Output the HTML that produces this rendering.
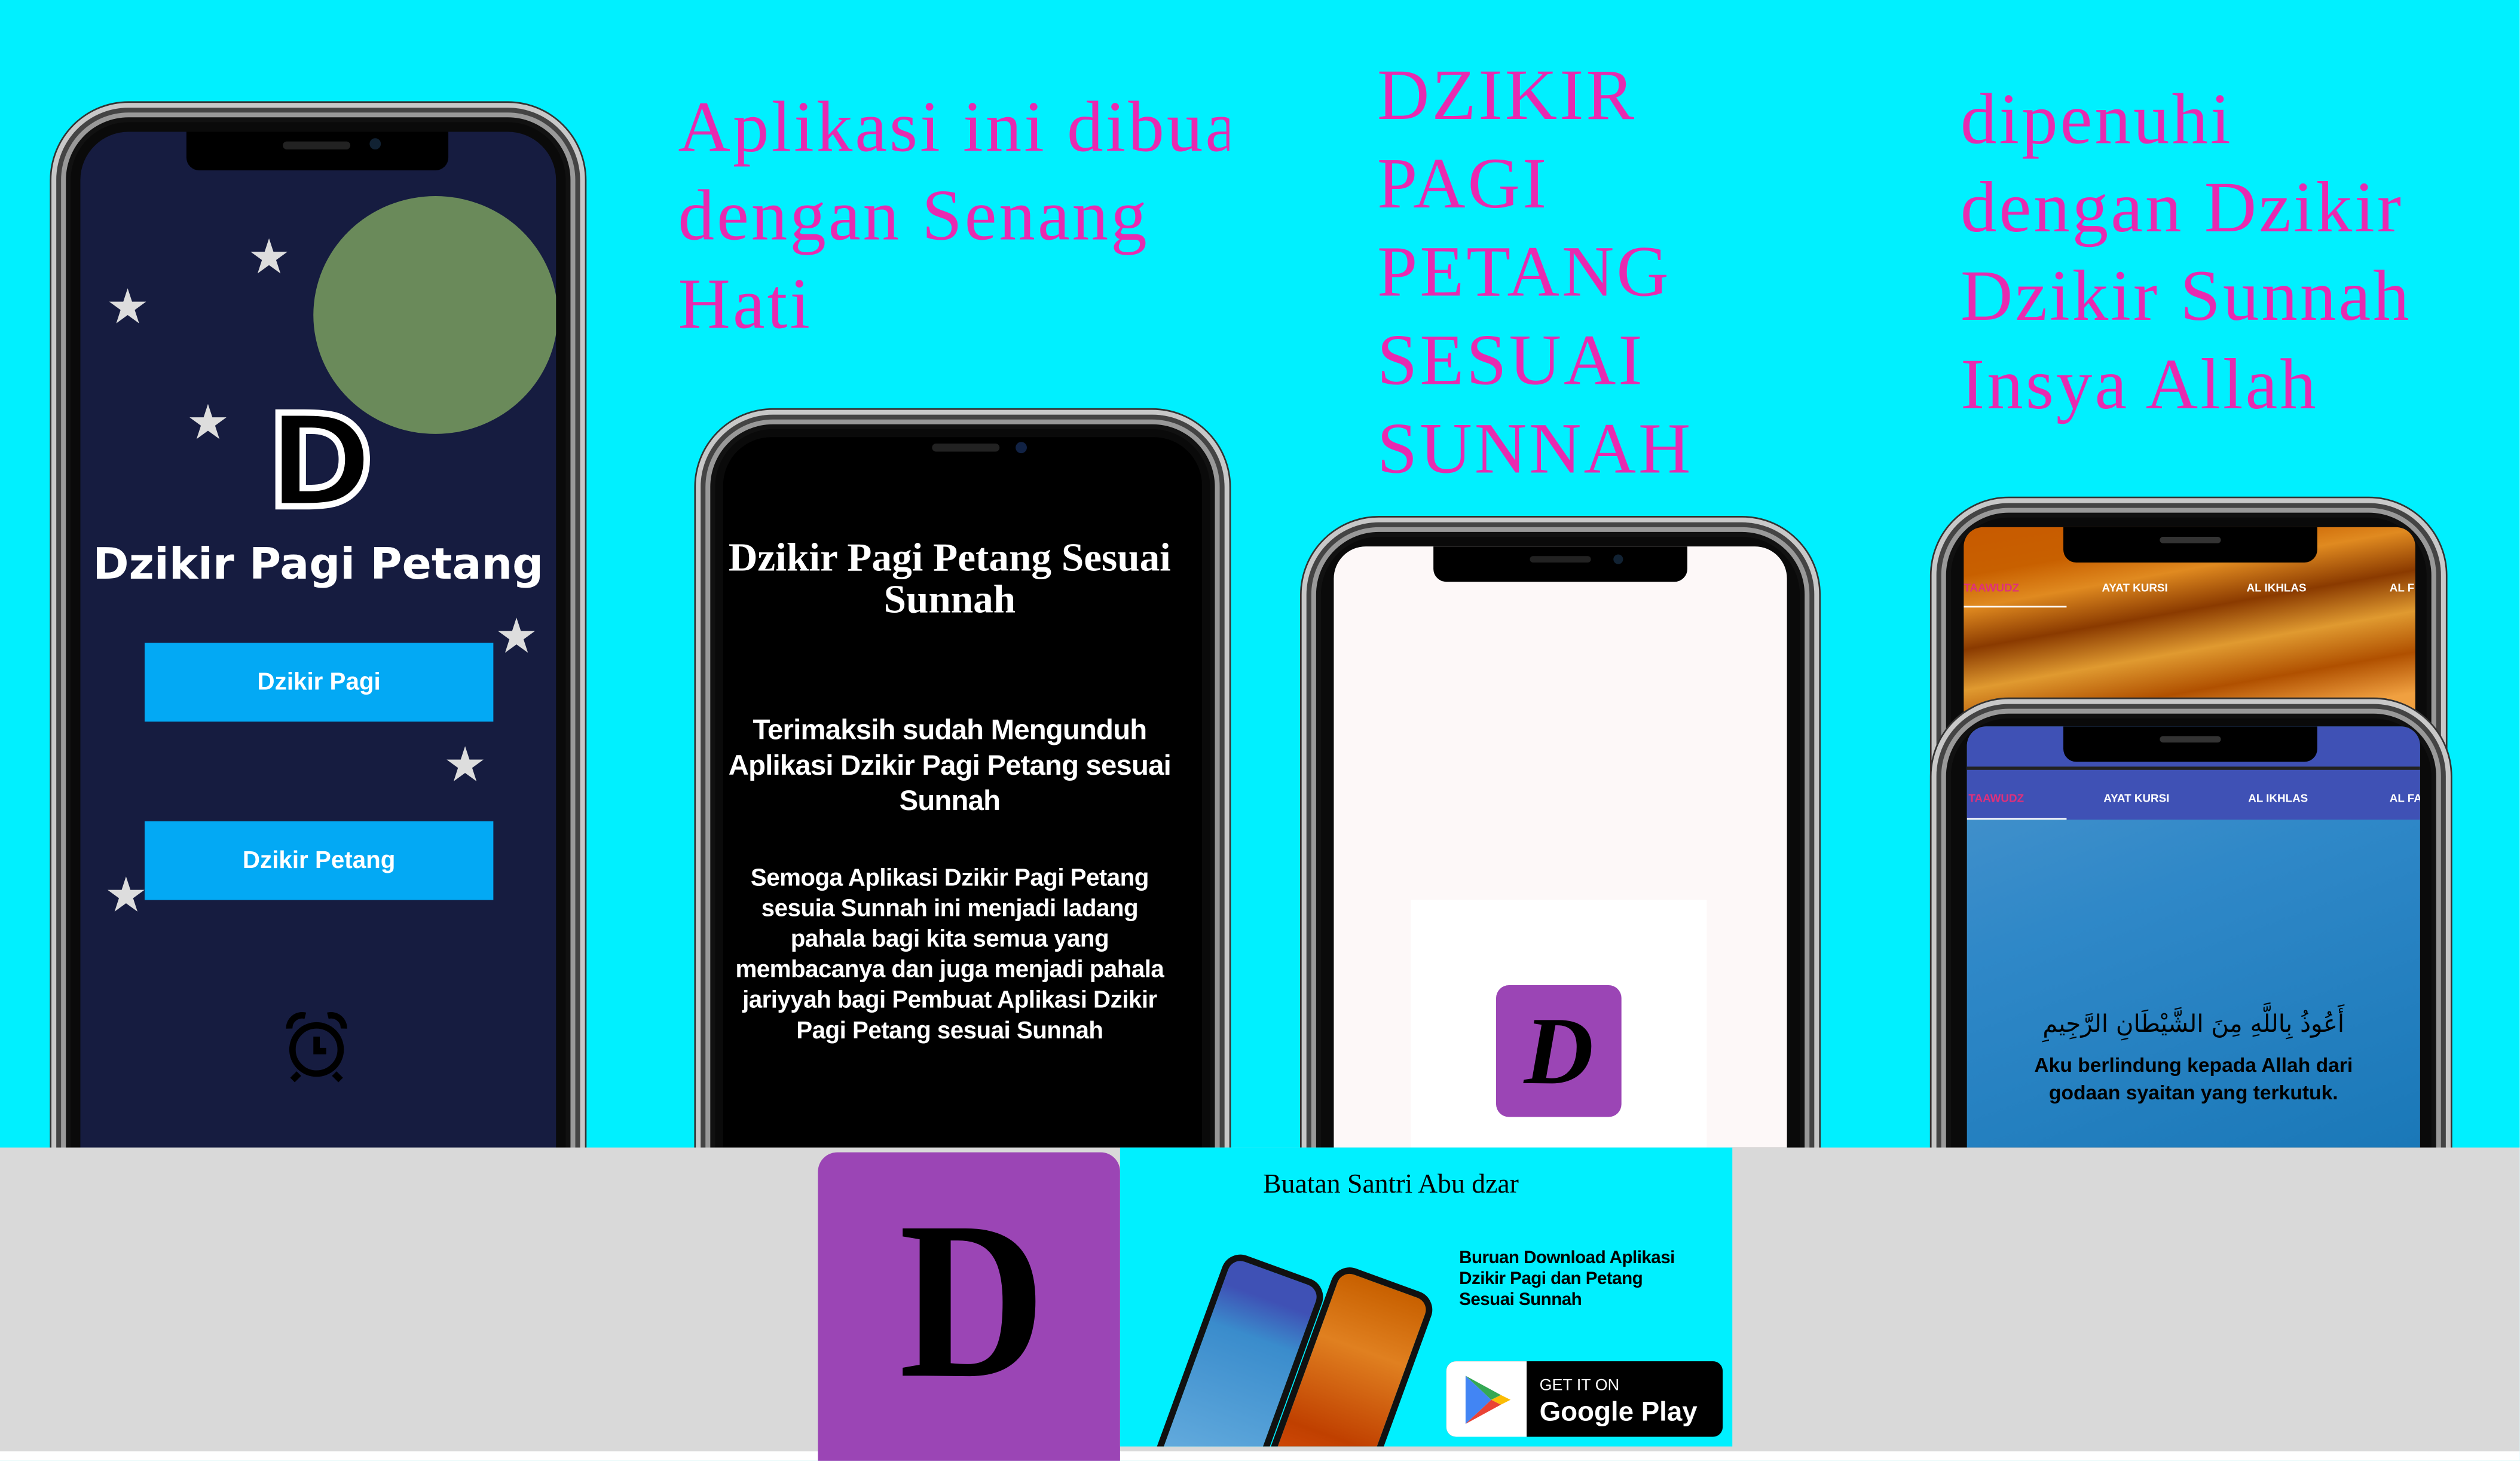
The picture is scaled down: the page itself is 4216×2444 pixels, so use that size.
<!DOCTYPE html>
<html><head><meta charset="utf-8">
<style>
*{margin:0;padding:0;box-sizing:border-box}
html,body{width:4216px;height:2444px;overflow:hidden;background:#fff}
#w{position:absolute;left:0;top:0;width:1568px;height:909px;transform:scale(2.6885);transform-origin:0 0;background:#00f0ff;overflow:hidden;font-family:"Liberation Sans",sans-serif}
.abs{position:absolute}
.phone{position:absolute;border-radius:48px;background:#0a0a0a;border:3px solid #c8c8c8;box-shadow:inset 0 0 0 3px #444,inset 0 0 0 6px #999,inset 0 0 0 9px #111,0 0 0 1px #333}
.screen{position:absolute;overflow:hidden;border-radius:30px 30px 0 0}
.mag{position:absolute;color:#e82ab0;font-family:"Liberation Serif",serif;font-size:45px;letter-spacing:1.5px;line-height:55px;white-space:nowrap}
.star{position:absolute;color:#ddd;font-size:30px;line-height:30px}
.btn{position:absolute;background:#03a9f4;color:#fff;font-weight:bold;font-size:15px;text-align:center;line-height:49px}
.tab{position:absolute;font-size:7px;font-weight:bold;color:#fff;white-space:nowrap}
</style></head><body><div id="w">

<!-- Phone 1 -->
<div class="phone" style="left:32px;top:64px;width:332px;height:700px"></div>
<div class="screen" style="left:50px;top:82px;width:296px;height:640px;background:#161c40">
  <div class="abs" style="left:145px;top:40px;width:152px;height:148px;border-radius:50%;background:#6a8a5a"></div>
  <div class="abs" style="left:66px;top:0;width:163px;height:24px;background:#000;border-radius:0 0 8px 8px"></div>
  <div class="abs" style="left:126px;top:6px;width:42px;height:5px;border-radius:3px;background:#222"></div>
  <div class="abs" style="left:180px;top:4px;width:7px;height:7px;border-radius:50%;background:#123"></div>
  <div class="abs" style="left:116px;top:166px;font-size:80px;line-height:80px;color:#000;font-family:'DejaVu Sans',sans-serif;-webkit-text-stroke:4px #fff;font-weight:bold">D</div>
  <div class="abs" style="left:-10px;width:316px;top:254px;text-align:center;font-family:'DejaVu Sans',sans-serif;font-weight:bold;font-size:27px;color:#fff;white-space:nowrap">Dzikir Pagi Petang</div>
  <div class="abs" style="left:124px;top:546px;width:46px;height:46px">
    <svg width="46" height="46" viewBox="0 0 46 46" fill="none" stroke="#000" stroke-width="4"><circle cx="23" cy="25" r="15"/><path d="M23 17v9h6M6 12a8 8 0 0 1 10-8M40 12a8 8 0 0 0-10-8M12 40l-4 4M34 40l4 4"/></svg>
  </div>
</div>
<div class="btn" style="left:90px;top:400px;width:217px;height:49px">Dzikir Pagi</div>
<div class="btn" style="left:90px;top:511px;width:217px;height:49px">Dzikir Petang</div>
<div class="star" style="left:154px;top:146px">★</div>
<div class="star" style="left:66px;top:177px">★</div>
<div class="star" style="left:116px;top:249px">★</div>
<div class="star" style="left:308px;top:382px">★</div>
<div class="star" style="left:276px;top:462px">★</div>
<div class="star" style="left:65px;top:543px">★</div>

<div class="mag" style="left:422px;top:52px;width:343px;overflow:hidden">Aplikasi ini dibuat<br>dengan Senang<br>Hati</div>

<!-- Phone 2 -->
<div class="phone" style="left:433px;top:255px;width:332px;height:640px"></div>
<div class="screen" style="left:450px;top:272px;width:298px;height:442px;background:#000">
  <div class="abs" style="left:130px;top:4px;width:42px;height:5px;border-radius:3px;background:#222"></div>
  <div class="abs" style="left:182px;top:3px;width:7px;height:7px;border-radius:50%;background:#124"></div>
  <div class="abs" style="left:-10px;width:302px;top:63px;text-align:center;color:#fff;font-family:'Liberation Serif',serif;font-weight:bold;font-size:25px;line-height:26px;white-space:nowrap">Dzikir Pagi Petang Sesuai<br>Sunnah</div>
  <div class="abs" style="left:-14px;width:310px;top:171px;text-align:center;color:#fff;font-weight:bold;font-size:17.6px;line-height:22px;white-space:nowrap;letter-spacing:-0.3px">Terimaksih sudah Mengunduh<br>Aplikasi Dzikir Pagi Petang sesuai<br>Sunnah</div>
  <div class="abs" style="left:-8px;width:298px;top:265px;text-align:center;color:#fff;font-weight:bold;font-size:15px;line-height:19px;white-space:nowrap;letter-spacing:-0.2px">Semoga Aplikasi Dzikir Pagi Petang<br>sesuia Sunnah ini menjadi ladang<br>pahala bagi kita semua yang<br>membacanya dan juga menjadi pahala<br>jariyyah bagi Pembuat Aplikasi Dzikir<br>Pagi Petang sesuai Sunnah</div>
</div>

<div class="mag" style="left:857px;top:32px">DZIKIR<br>PAGI<br>PETANG<br>SESUAI<br>SUNNAH</div>

<!-- Phone 3 -->
<div class="phone" style="left:810px;top:322px;width:322px;height:560px"></div>
<div class="screen" style="left:830px;top:340px;width:282px;height:374px;background:#fdf8f8;border-radius:20px 20px 0 0">
  <div class="abs" style="left:62px;top:0;width:158px;height:22px;background:#000;border-radius:0 0 8px 8px"></div>
  <div class="abs" style="left:122px;top:6px;width:38px;height:4px;border-radius:2px;background:#222"></div>
  <div class="abs" style="left:174px;top:5px;width:6px;height:6px;border-radius:50%;background:#123"></div>
  <div class="abs" style="left:48px;top:220px;width:184px;height:160px;background:#fff"></div>
  <div class="abs" style="left:101px;top:273px;width:78px;height:82px;border-radius:8px;background:#9b45b5;color:#000;font-family:'Liberation Serif',serif;font-weight:bold;font-size:60px;line-height:82px;text-align:center;font-style:italic">D</div>
</div>

<div class="mag" style="left:1220px;top:47px">dipenuhi<br>dengan Dzikir<br>Dzikir Sunnah<br>Insya Allah</div>

<!-- Phone 4a -->
<div class="phone" style="left:1202px;top:310px;width:320px;height:500px"></div>
<div class="screen" style="left:1222px;top:328px;width:281px;height:120px;border-radius:12px 12px 0 0;background:linear-gradient(170deg,#c85a00 0%,#c86000 18%,#e08a20 30%,#8a3a00 45%,#e09a30 60%,#b05000 75%,#f0a040 90%)">
  <div class="abs" style="left:62px;top:0;width:158px;height:22px;background:#000;border-radius:0 0 8px 8px"></div>
  <div class="abs" style="left:122px;top:6px;width:38px;height:4px;border-radius:2px;background:#333"></div>
  <div class="tab" style="left:0;top:35px;color:#e0307a">TAAWUDZ</div>
  <div class="tab" style="left:86px;top:35px">AYAT KURSI</div>
  <div class="tab" style="left:176px;top:35px">AL IKHLAS</div>
  <div class="tab" style="left:265px;top:35px">AL F</div>
  <div class="abs" style="left:0;top:49px;width:64px;height:1px;background:#fff"></div>
</div>
<!-- Phone 4b -->
<div class="phone" style="left:1202px;top:435px;width:323px;height:460px"></div>
<div class="screen" style="left:1224px;top:452px;width:282px;height:262px;border-radius:12px 12px 0 0;background:linear-gradient(160deg,#4a94cc,#2f88c8 40%,#1a78b8)">
  <div class="abs" style="left:0;top:0;width:282px;height:58px;background:#3f51b5"></div>
  <div class="abs" style="left:60px;top:0;width:158px;height:22px;background:#000;border-radius:0 0 8px 8px"></div>
  <div class="abs" style="left:120px;top:6px;width:38px;height:4px;border-radius:2px;background:#333"></div>
  <div class="abs" style="left:0;top:25px;width:282px;height:2px;background:#222"></div>
  <div class="tab" style="left:1px;top:42px;color:#e0307a">TAAWUDZ</div>
  <div class="tab" style="left:85px;top:42px">AYAT KURSI</div>
  <div class="tab" style="left:175px;top:42px">AL IKHLAS</div>
  <div class="tab" style="left:263px;top:42px">AL FA</div>
  <div class="abs" style="left:0;top:57px;width:62px;height:1px;background:#fff"></div>
  <div class="abs" style="left:0;width:282px;top:176px;text-align:center;font-family:'DejaVu Sans',sans-serif;font-size:15px;color:#000" dir="rtl">أَعُوذُ بِاللَّهِ مِنَ الشَّيْطَانِ الرَّجِيمِ</div>
  <div class="abs" style="left:0;width:282px;top:203px;text-align:center;font-weight:bold;font-size:12.5px;line-height:17px;color:#000;white-space:nowrap">Aku berlindung kepada Allah dari<br>godaan syaitan yang terkutuk.</div>
</div>

<!-- Bottom band -->
<div class="abs" style="left:0;top:714px;width:1568px;height:195px;background:#d9d9d9"></div>
<div class="abs" style="left:0;top:903px;width:1568px;height:6px;background:#fff"></div>
<div class="abs" style="left:509px;top:717px;width:188px;height:192px;border-radius:12px 12px 0 0;background:#9b45b5"></div>
<div class="abs" style="left:545px;top:730px;width:120px;text-align:center;font-family:'Liberation Serif',serif;font-weight:bold;font-size:140px;line-height:160px;color:#000;transform:scaleX(0.9)">D</div>
<div class="abs" style="left:697px;top:714px;width:381px;height:186px;background:#00f0ff;overflow:hidden">
  <div class="abs" style="left:89px;top:13px;font-family:'Liberation Serif',serif;font-size:17px;color:#000;white-space:nowrap">Buatan Santri Abu dzar</div>
  <div class="abs" style="left:211px;top:63px;font-size:11px;line-height:13px;color:#000;font-weight:bold;letter-spacing:-0.2px;white-space:nowrap">Buruan Download Aplikasi<br>Dzikir Pagi dan Petang<br>Sesuai Sunnah</div>
  <div class="abs" style="left:40px;top:70px;width:66px;height:150px;border-radius:12px;background:linear-gradient(180deg,#3f51b5 0%,#3f51b5 12%,#3a8ccc 30%,#6ab0e0 100%);border:4px solid #111;transform:rotate(20deg)"></div>
  <div class="abs" style="left:108px;top:78px;width:66px;height:150px;border-radius:12px;background:linear-gradient(180deg,#c86000,#e08020 30%,#c04000 70%,#e05010);border:4px solid #111;transform:rotate(20deg)"></div>
  <div class="abs" style="left:203px;top:133px;width:172px;height:47px;border-radius:6px;background:#000"></div>
  <div class="abs" style="left:203px;top:133px;width:50px;height:47px;border-radius:6px 0 0 6px;background:#fff">
    <svg width="50" height="47" viewBox="0 0 50 47"><path d="M12 9 L28 24 L12 39Z" fill="#4285f4"/><path d="M12 9 L34 21 L28 24Z" fill="#34a853"/><path d="M12 39 L34 27 L28 24Z" fill="#ea4335"/><path d="M34 21 L40 24 L34 27 L28 24Z" fill="#fbbc04"/></svg>
  </div>
  <div class="abs" style="left:261px;top:143px;font-size:10px;color:#fff">GET IT ON</div>
  <div class="abs" style="left:261px;top:155px;font-size:17px;font-weight:bold;color:#fff;white-space:nowrap">Google Play</div>
</div>

</div></body></html>
